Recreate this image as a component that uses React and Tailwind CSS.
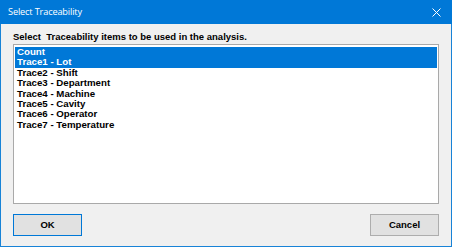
import React from "react";

const items = [
  { label: "Count", selected: true },
  { label: "Trace1 - Lot", selected: true },
  { label: "Trace2 - Shift" },
  { label: "Trace3 - Department" },
  { label: "Trace4 - Machine" },
  { label: "Trace5 - Cavity" },
  { label: "Trace6 - Operator" },
  { label: "Trace7 - Temperature" },
];

const App = () => {
  return (
    <div className="w-[452px] h-[247px] flex flex-col border border-[#1883d7] border-t-0 bg-[#f0f0f0] font-['Liberation_Sans',Arial,sans-serif] text-black">
      {/* Title bar */}
      <div className="h-[24px] -mx-px bg-[#0078d7] flex items-center justify-between pl-[8px] pr-[8px]">
        <span className="text-white text-[9.2px] font-['Open_Sans',sans-serif] tracking-[-0.15px]">
          Select Traceability
        </span>
        <svg width="9" height="9" viewBox="0 0 9 9" className="mr-[3px]">
          <path d="M0.5 0.5 L8.5 8.5 M8.5 0.5 L0.5 8.5" stroke="white" strokeWidth="1" />
        </svg>
      </div>

      {/* Body */}
      <div className="flex-1 flex flex-col px-[12px] pt-[7px] pb-[10px]">
        <p className="text-[9.5px] font-bold leading-[12px] whitespace-pre">
          Select  Traceability items to be used in the analysis.
        </p>

        <div className="mt-px h-[160px] bg-white border border-[#a9a9a9] px-px pt-[2px]">
          {items.map((item) => (
            <div
              key={item.label}
              className={
                item.selected
                  ? "h-[10.4px] leading-[10.4px] pl-[2px] text-[9.7px] font-bold bg-[#0078d7] text-white"
                  : "h-[10.4px] leading-[10.4px] pl-[2px] text-[9.7px] font-bold"
              }
            >
              {item.label}
            </div>
          ))}
        </div>

        {/* Buttons */}
        <div className="mt-auto flex justify-between">
          <button className="w-[69px] h-[22px] bg-[#e1e1e1] border border-[#0078d7] text-[9.5px] font-bold">
            OK
          </button>
          <button className="w-[69px] h-[22px] bg-[#e1e1e1] border border-[#adadad] text-[9.5px] font-bold">
            Cancel
          </button>
        </div>
      </div>
    </div>
  );
};

export default App;
